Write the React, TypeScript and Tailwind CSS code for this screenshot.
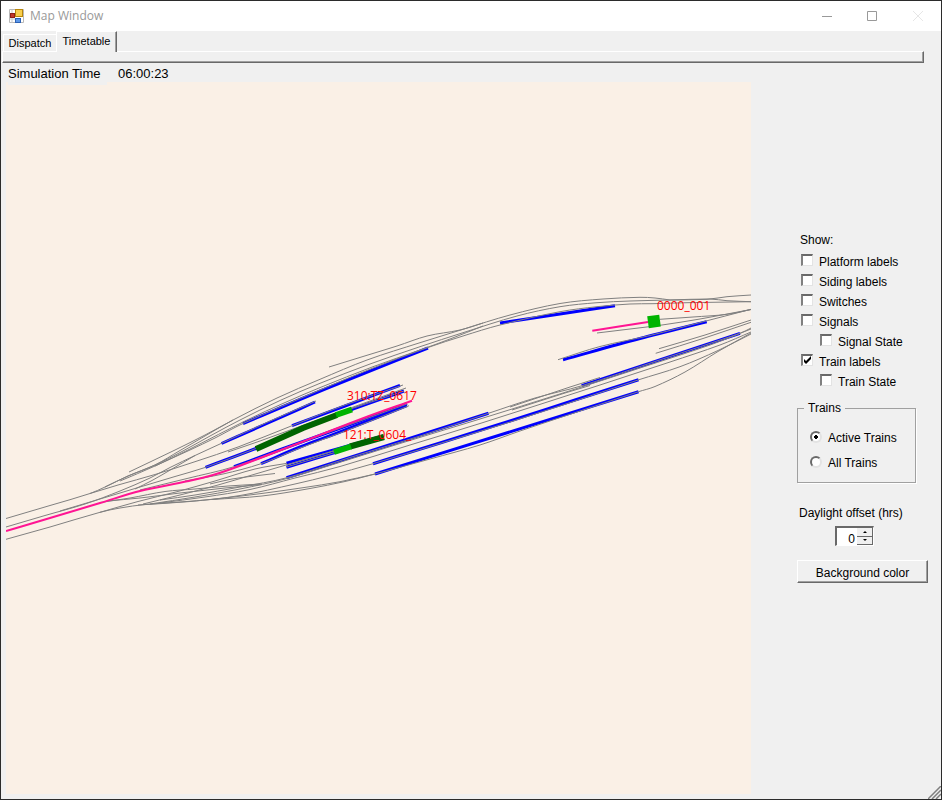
import React, { useState } from "react";

const tracks = [
  // upper yard
  "6,518.5 50,505.5 90,493.5 105,487 128,476 155,465 180,450.5 205,436 233,420 277,398 320,379.3 367,360 420,342.7 463,329.3 510,315 560,303.5 603,299 640,297.3 655,298 670,300",
  "105,487 128,476 155,465 182,451.5 210,436 240,420 280,400.5 320,383.3 370,364 420,346.7 463,332.7 517,316 560,306.7 597,302.7 630,301 670,300 710,299 727,300.7 751,301.7",
  "120,481 155,466 190,449 247,420 284,403 320,387.6 373,366.7 420,350 450,339 483,326",
  "129,472 175,450 205,435 233,420",
  "329,367 363,356.500 397,346 427,336 460,330 483,323",
  "155,466 190,450 215,438 243,423.5 320,390 373,368 428,347.5 463,336 500,325 560,311.7 597,306.7 630,304 653,303.7 687,302.7 751,301.7",
  "670,300 707,299.3 727,296.7 751,295",
  "90,493.5 118,485 155,474.500 195,461.7 238,447 292,425.7 345,405 403,385",
  "228,452 260,441 293,429 345,410 406,388",
  "6,527 45,515.5 85,504 120,491 150,478 170,467.500 195,455.500 221,443.5 268,422 316,401",
  "60,511 105,497.500 140,487 175,476.500 205,467.5 257,448 297,431 337,414 404,391",
  "135,489 152,480.500 172,469 195,455.500",
  "140,490 187,478.500 234,466.7 282,449 335,430 407,404",
  "185,481 223,474 261,463.7 300,448 340,433 409,405.7",
  // lower yard
  "6,539.3 50,527 100,512.3 120,508 145,504.500 180,502 213,499.3 263,493.3 303,487.7 340,481.7 375,474",
  "100,512.3 138,501.500 177,491.7 215,481 255,469 287,463.3",
  "107,501 140,498 180,493 225,488 262,484.500",
  "100,502.500 130,498 165,491.500 195,489 228,486 262,484",
  "143,504 180,495 218,485 252,475 286,465 335,450.5 383,436",
  "210,484 232,479 254,476 275,473.5",
  "160,500 195,495 240,487 287,477.7 350,457.5 420,436 488.5,413.3 535,398 582,385.7 661,359.5 740,333.3 751,328",
  "150,504 195,497 240,489 285,479 325,467 400,443.500 480,419 563,393 640,368 710,345 751,329",
  "160,503 205,497 250,489.500 295,478 340,466.5 410,445 480,423.5 600,385 670,362 720,345 751,332",
  "138,505 190,501.5 240,495.500 295,484 330,475.500 373,463.7 440,443.500 510,422 575,401 638,380 680,366.7 718,350.500 751,334",
  "212,499.5 262,496 310,488.500 345,481.500 375,474 430,459 480,445 520,431 580,411 638.5,391.7 655,386.500 685,372 718,351.500 751,333",
  "286.5,467 313,459 340,451",
  "286.5,465 313,457 340,449",
  "510,407 540,397 570,387 600,377.500",
  "512,410 540,401 565,393 590,385.500",
  // east end
  "558,359.7 600,346.500 650,335.500 706,321 751,309.3",
  "597,333 630,329 662,325 700,319 751,309.5",
  "660,319.3 693,317 727,314.3 751,309.5",
  "659,348.7 705,335 751,320",
  "655.7,353.3 703,338.500 751,322.3",
];

const sidings = [
  "243,423.5 330,387 428,348",
  "221.5,443.5 268,423 315,402",
  "292,425.7 345,406 400,385.3",
  "205.5,467.3 257,448 297,431 337,415 404,391",
  "234,466.7 282,449 335,430 407,403.7",
  "261,463.7 300,447 340,432 407,405.7",
  "286.5,463.3 383,436",
  "286.5,467.3 340,451",
  "286.5,477.7 488.5,413.3",
  "373,463.7 440,443 510,421 575,400 638.5,379.7",
  "375,474 638.5,391.7",
  "581.7,385.7 740,333.3",
  "563,359.7 640,338.5 706.7,321.7",
  "500,323 560,314 615,305.7",
];

const paths = [
  "6,531 50,518 100,503 140,491 187,481.3 213,475 240,465.7 307,440 367,416.7 412,400.7",
  "592.3,330.7 648,322",
];

const options = [
  { name: "Platform labels" },
  { name: "Siding labels" },
  { name: "Switches" },
  { name: "Signals" },
  { name: "Signal State", nested: true },
  { name: "Train labels", checked: true },
  { name: "Train State", nested: true },
];

// smooth curve through a list of "x,y" points
const curve = (points: string) => {
  const p = points.split(" ").map((pair) => pair.split(",").map(Number));
  let d = `M${p[0][0]} ${p[0][1]}`;
  for (let i = 0; i < p.length - 1; i++) {
    const a = p[i - 1] || p[i];
    const b = p[i];
    const c = p[i + 1];
    const e = p[i + 2] || c;
    // handles a third of the segment long, so uneven spacing does not overshoot
    const len = Math.abs(c[0] - b[0]) / 3;
    const s1 = (c[1] - a[1]) / (c[0] - a[0]);
    const s2 = (e[1] - b[1]) / (e[0] - b[0]);
    d += `C${b[0] + len} ${b[1] + len * s1} ${c[0] - len} ${c[1] - len * s2} ${c[0]} ${c[1]}`;
  }
  return d;
};

const TitleBar = () => (
  <header className="flex h-[30px] items-center bg-white pl-2 font-['Open_Sans',sans-serif] text-xs text-[#999]">
    <svg width="15" height="15" viewBox="0 0 15 15" className="mr-1.5">
      <path d="M.5.5h14v13h-14z" fill="#fff" stroke="#b9b9b9" />
      <path d="M3 1v13M1 10h5" stroke="#c9c9c9" />
      <rect x="1.5" y="4.5" width="4" height="4" fill="#c2372b" stroke="#8e1f16" />
      <rect x="6.5" y=".5" width="7" height="7" fill="#f8cf4e" stroke="#b8860b" />
      <rect x="6.5" y="9.5" width="5" height="4" fill="#5c97e8" stroke="#2d62b5" />
    </svg>
    <h1 className="flex-1">Map Window</h1>
    <button aria-label="Minimize" className="flex h-full w-[45px] items-center justify-center">
      <svg width="10" height="10"><path d="M0 5.5h10" stroke="#999" /></svg>
    </button>
    <button aria-label="Maximize" className="flex h-full w-[45px] items-center justify-center">
      <svg width="10" height="10"><path d="M.5.5h9v9h-9z" fill="none" stroke="#999" /></svg>
    </button>
    <button aria-label="Close" disabled className="flex h-full w-[47px] items-center justify-center">
      <svg width="10" height="10"><path d="M0 0l10 10M10 0L0 10" stroke="#e6e6e6" /></svg>
    </button>
  </header>
);

const Tabs = () => (
  <div className="pr-[17px] pl-px">
    <div role="tablist" className="flex h-5 items-end pl-px text-[11px]">
      <button role="tab" aria-selected="false" className="h-[17px] w-[53px] border-t border-l border-white leading-4">
        Dispatch
      </button>
      <button
        role="tab"
        aria-selected="true"
        className="relative -mb-px h-[21px] w-[61px] border-t border-r border-l border-t-white border-r-[#696969] border-l-white bg-[#f0f0f0] pb-0.5 leading-4 shadow-[inset_-1px_0_0_#a0a0a0]"
      >
        Timetable
      </button>
    </div>
    <div className="h-3 border border-t-white border-r-[#696969] border-b-[#696969] border-l-white shadow-[inset_-1px_-1px_0_#a0a0a0]"></div>
  </div>
);

const TrackMap = () => (
  <svg viewBox="6 82 745 712" className="block w-full bg-[#faf0e6]" role="img" aria-label="Track map">
    <g fill="none" stroke="#0000ff" strokeWidth="3">
      {sidings.map((points, idx) => (
        <path key={idx} d={curve(points)} />
      ))}
    </g>
    <g fill="none" stroke="#808080" strokeWidth="1">
      {tracks.map((points, idx) => (
        <path key={idx} d={curve(points)} />
      ))}
    </g>
    <g fill="none" stroke="#ff1493" strokeWidth="2">
      {paths.map((points, idx) => (
        <path key={idx} d={curve(points)} />
      ))}
    </g>
    {/* Trains */}
    <g fill="none" strokeWidth="6">
      <path d="M256 449L303 428L337 415" stroke="#006400" />
      <path d="M336 415L352 409.5" stroke="#00b400" />
      <path d="M350 446.5L384 437" stroke="#006400" />
      <path d="M334 452L351 446.5" stroke="#00b400" />
      <path d="M648 322.2L660 320.6" stroke="#00b400" strokeWidth="12" />
    </g>
    <g fill="#ff0000" className="font-['Open_Sans',sans-serif] text-xs">
      <text x="347" y="400">310:TZ_0617</text>
      <text x="343" y="439">121:T_0604_</text>
      <text x="657" y="310">0000_001</text>
    </g>
  </svg>
);

const Controls = () => {
  const [offset, setOffset] = useState(0);

  return (
    <aside className="w-[190px] shrink-0 pt-[150px] pr-[13px] pl-[46px] text-xs">
      <p className="h-[18px] pl-[3px] leading-4">Show:</p>
      {options.map((option) => (
        <label
          key={option.name}
          className={`flex h-5 items-start gap-1.5 pt-1 leading-4 ${option.nested ? "pl-[23px]" : "pl-1"}`}
        >
          <span className="grid size-3">
            <input
              type="checkbox"
              defaultChecked={option.checked}
              className="peer col-start-1 row-start-1 size-3 appearance-none border-t-2 border-r border-b border-l-2 border-t-[#696969] border-r-[#e3e3e3] border-b-[#e3e3e3] border-l-[#808080] bg-white"
            />
            <svg viewBox="0 0 12 12" className="pointer-events-none invisible col-start-1 row-start-1 size-3 peer-checked:visible">
              <path d="M3 5v3l2 2 5-5v-3l-5 5z" />
            </svg>
          </span>
          {option.name}
        </label>
      ))}

      <fieldset className="mt-2.5 mr-3 border border-[#a0a0a0] px-3 pt-2 pb-2 shadow-[1px_1px_0_white]">
        <legend className="-ml-1.5 px-1 leading-4">Trains</legend>
        {["Active Trains", "All Trains"].map((name, idx) => (
          <label key={name} className="flex h-[25px] items-center gap-1.5">
            <input
              type="radio"
              name="trains"
              defaultChecked={idx === 0}
              className="size-3 appearance-none rounded-full border-2 border-t-[#696969] border-r-[#e3e3e3] border-b-[#e3e3e3] border-l-[#696969] bg-white checked:bg-[radial-gradient(black_2px,white_2px)]"
            />
            <span className="pt-0.5">{name}</span>
          </label>
        ))}
      </fieldset>

      <label htmlFor="offset" className="mt-[22px] block pl-0.5 leading-4">
        Daylight offset (hrs)
      </label>
      <div className="mt-[5px] ml-[38px] flex h-5 w-[39px] border-t-2 border-r border-b border-l-2 border-t-[#696969] border-r-white border-b-white border-l-[#696969] bg-white">
        <input
          id="offset"
          type="text"
          value={offset}
          onChange={(e) => setOffset(Number(e.target.value) || 0)}
          className="min-w-0 flex-1 bg-white pt-1 pr-0.5 text-right outline-none"
        />
        <div className="flex w-4 flex-col">
          <button
            aria-label="Increase"
            onClick={() => setOffset(offset + 1)}
            className="flex flex-1 items-center justify-center border-r border-b border-[#696969] bg-[#f0f0f0]"
          >
            <svg width="4" height="2"><path d="M0 2L2 0L4 2z" /></svg>
          </button>
          <button
            aria-label="Decrease"
            onClick={() => setOffset(offset - 1)}
            className="flex flex-1 items-center justify-center border-r border-b border-[#696969] bg-[#f0f0f0]"
          >
            <svg width="4" height="2"><path d="M0 0L2 2L4 0z" /></svg>
          </button>
        </div>
      </div>

      <button className="mt-3.5 h-[23px] w-full border border-t-white border-r-[#696969] border-b-[#696969] border-l-white pt-0.5 shadow-[inset_-1px_-1px_0_#a0a0a0]">
        Background color
      </button>
    </aside>
  );
};

const App = () => {
  return (
    <div className="relative flex min-h-screen flex-col border border-[#2b2b2b] bg-[#f0f0f0] font-['Liberation_Sans',Arial,sans-serif] text-black">
      <TitleBar />
      <Tabs />
      <div className="relative flex h-[19px] pl-[7px] text-[13px] leading-[22px]">
        <span className="h-[22px] w-[99px] bg-[#f0f0f0]">Simulation Time</span>
        <time className="pl-[11px]">06:00:23</time>
      </div>
      <main className="flex flex-1 items-start pb-[5px] pl-[5px]">
        <div className="min-w-0 flex-1">
          <TrackMap />
        </div>
        <Controls />
      </main>
      {/* Resize grip */}
      <svg width="13" height="13" className="absolute right-0 bottom-0">
        <path d="M0 13L13 0M4 13L13 4M8 13L13 8" stroke="#808080" strokeWidth="1.5" />
      </svg>
    </div>
  );
};

export default App;
